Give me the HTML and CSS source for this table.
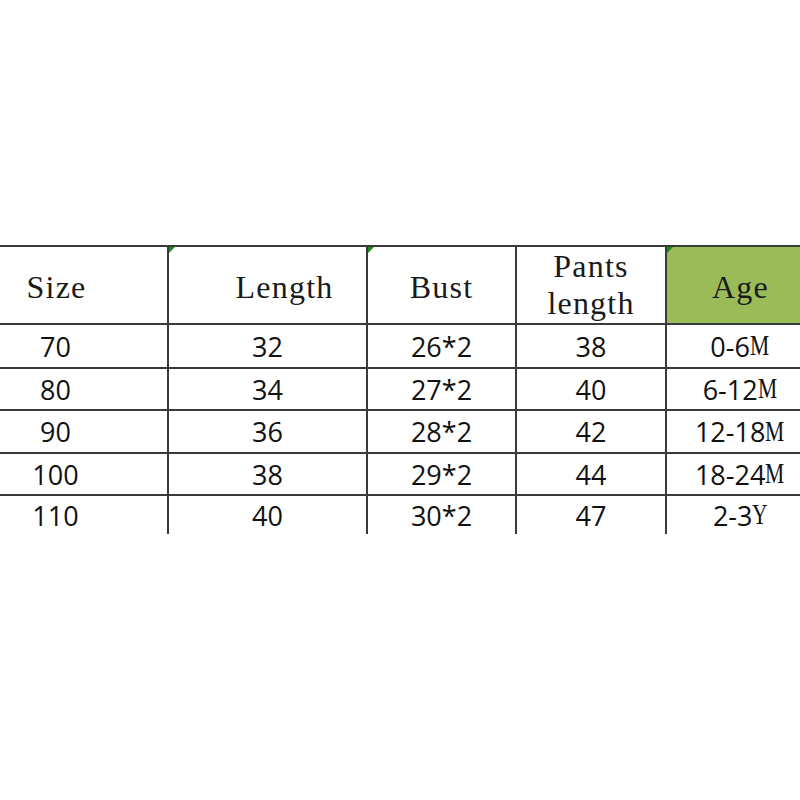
FILE: index.html
```html
<!DOCTYPE html>
<html>
<head>
<meta charset="utf-8">
<link rel="stylesheet" href="styles.css">
</head>
<body>
<div class="sheet">
  <div class="row head">
    <div class="cell c1">Size</div>
    <div class="cell c2 mark"><span class="shift">Length</span></div>
    <div class="cell c3 mark">Bust</div>
    <div class="cell c4"><span class="two">Pants<br>length</span></div>
    <div class="cell c5 mark green">Age</div>
  </div>
  <div class="row r1">
    <div class="cell c1">70</div><div class="cell c2">32</div><div class="cell c3">26*2</div><div class="cell c4">38</div><div class="cell c5">0-6<span class="u">M</span></div>
  </div>
  <div class="row r2">
    <div class="cell c1">80</div><div class="cell c2">34</div><div class="cell c3">27*2</div><div class="cell c4">40</div><div class="cell c5">6-12<span class="u">M</span></div>
  </div>
  <div class="row r3">
    <div class="cell c1">90</div><div class="cell c2">36</div><div class="cell c3">28*2</div><div class="cell c4">42</div><div class="cell c5">12-18<span class="u">M</span></div>
  </div>
  <div class="row r4">
    <div class="cell c1">100</div><div class="cell c2">38</div><div class="cell c3">29*2</div><div class="cell c4">44</div><div class="cell c5">18-24<span class="u">M</span></div>
  </div>
  <div class="row r5">
    <div class="cell c1">110</div><div class="cell c2">40</div><div class="cell c3">30*2</div><div class="cell c4">47</div><div class="cell c5">2-3<span class="u">Y</span></div>
  </div>
</div>
</body>
</html>
```
FILE: styles.css
```css
html, body {
  margin: 0;
  padding: 0;
  background: #ffffff;
}
body {
  width: 800px;
  height: 800px;
  overflow: hidden;
}
.sheet {
  margin-top: 245px;
  width: 800px;
  color: #111111;
  font-family: "Open Sans", "Liberation Sans", sans-serif;
  font-size: 27px;
}
.row {
  display: grid;
  grid-template-columns: 167px 199px 149px 150px 135px;
  border-top: 2px solid #3a3a3a;
  box-sizing: border-box;
}
.head { height: 78px; }
.r1 { height: 44px; }
.r2 { height: 42px; }
.r3 { height: 43px; }
.r4 { height: 42px; }
.r5 { height: 40px; }
.cell {
  position: relative;
  display: flex;
  align-items: center;
  justify-content: center;
  box-sizing: border-box;
  border-left: 2px solid #3a3a3a;
  line-height: 1;
}
.c1 {
  border-left: none;
  padding-right: 56px;
}
.c5 {
  padding-left: 14px;
}
.head .cell {
  font-family: "Liberation Serif", "DejaVu Serif", serif;
  font-size: 32px;
  letter-spacing: 1.2px;
  color: #1a1a1a;
  padding-top: 4px;
}
.head .c1 { padding-right: 54px; }
.shift { margin-left: 34px; }
.two {
  display: block;
  text-align: center;
  line-height: 37px;
  margin-top: -4px;
}
.green {
  background: #9bbb59;
}
.mark::before {
  content: "";
  position: absolute;
  left: 0;
  top: 0;
  width: 0;
  height: 0;
  border-top: 6px solid #1a8a1a;
  border-right: 6px solid transparent;
}
.u {
  display: inline-block;
  font-family: "Liberation Serif", serif;
  font-size: 30px;
  transform: scaleX(0.72);
  transform-origin: left center;
  margin-right: -6px;
  position: relative;
  top: -1px;
}
```
